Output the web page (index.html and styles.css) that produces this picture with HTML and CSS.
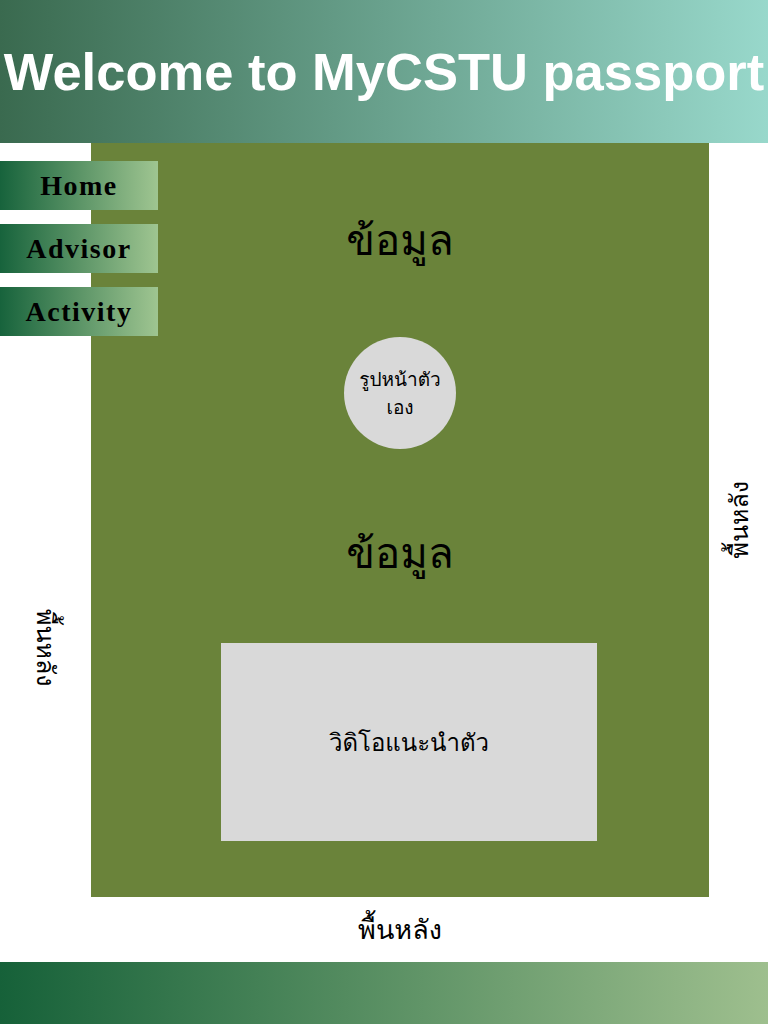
FILE: index.html
```html
<!DOCTYPE html>
<html lang="th">

<head>
  <meta charset="UTF-8" />
  <meta name="viewport" content="width=device-width, initial-scale=1.0" />
  <title>MyCSTU passport</title>
  <link rel="stylesheet" href="styles.css">
</head>

<body>

  <header class="banner">
    <h1>Welcome to MyCSTU passport</h1>
  </header>

  <div class="layout">
    <aside class="side side-left">
      <nav class="menu">
        <a href="#" class="menu-item">Home</a>
        <a href="#" class="menu-item">Advisor</a>
        <a href="#" class="menu-item">Activity</a>
      </nav>
      <span class="side-label label-down">พื้นหลัง</span>
    </aside>

    <main class="content">
      <h2 class="info">ข้อมูล</h2>
      <div class="avatar">รูปหน้าตัว<br>เอง</div>
      <h2 class="info info-second">ข้อมูล</h2>
      <div class="video">วิดิโอแนะนำตัว</div>
    </main>

    <aside class="side side-right">
      <span class="side-label label-up">พื้นหลัง</span>
    </aside>
  </div>

  <div class="bottom-label">พื้นหลัง</div>

  <footer class="footer-bar"></footer>

</body>

</html>
```

FILE: styles.css
```css
body {
  margin: 0;
  padding: 0;
  width: 768px;
  font-family: "Loma", "Noto Sans Thai Looped", "Garuda", "Noto Sans Thai", "Noto Sans", sans-serif;
  color: #000;
  background-color: #fff;
  overflow: hidden;
}

.banner {
  height: 143px;
  display: flex;
  justify-content: center;
  align-items: center;
  background: linear-gradient(90deg, #3a6a4f, #98d8cb);
  overflow: hidden;
}

.banner h1 {
  margin: 0;
  font-family: "Liberation Sans", Arial, sans-serif;
  font-weight: bold;
  font-size: 52.5px;
  color: #fff;
  white-space: nowrap;
}

.layout {
  display: grid;
  grid-template-columns: 91px 618px 59px;
  height: 754px;
}

.side {
  position: relative;
  display: flex;
  justify-content: center;
  align-items: center;
}

.side-left {
  padding-top: 256px;
}

.menu {
  position: absolute;
  top: 18px;
  left: 0;
  width: 158px;
  display: flex;
  flex-direction: column;
  gap: 14px;
  z-index: 1;
}

.menu-item {
  height: 49px;
  display: flex;
  justify-content: center;
  align-items: center;
  background: linear-gradient(90deg, #17633c, #9fc591);
  font-family: "Liberation Serif", "Times New Roman", serif;
  font-weight: bold;
  font-size: 28px;
  letter-spacing: 1.5px;
  color: #000;
  text-decoration: none;
}

.side-label {
  font-size: 25px;
  writing-mode: vertical-rl;
}

.label-up {
  transform: rotate(180deg);
}

.content {
  background-color: #6a833a;
  display: flex;
  flex-direction: column;
  align-items: center;
}

.info {
  margin: 67px 0 0;
  height: 60px;
  line-height: 60px;
  font-size: 42px;
  font-weight: normal;
}

.info-second {
  margin-top: 74px;
}

.avatar {
  margin-top: 67px;
  width: 112px;
  height: 112px;
  border-radius: 50%;
  background-color: #d9d9d9;
  display: flex;
  justify-content: center;
  align-items: center;
  text-align: center;
  font-size: 19px;
  line-height: 28px;
}

.video {
  margin: 60px 0 0 130px;
  align-self: flex-start;
  width: 376px;
  height: 198px;
  background-color: #d9d9d9;
  display: flex;
  justify-content: center;
  align-items: center;
  font-size: 24px;
}

.bottom-label {
  margin-left: 91px;
  width: 618px;
  height: 65px;
  display: flex;
  justify-content: center;
  align-items: center;
  font-size: 27px;
}

.footer-bar {
  height: 62px;
  background: linear-gradient(90deg, #166139, #9ebf8e);
}
```
